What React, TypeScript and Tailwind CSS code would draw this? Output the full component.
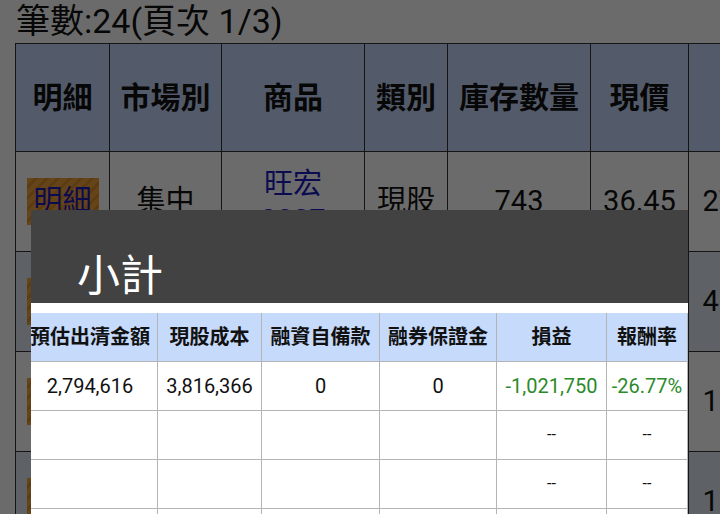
import React from "react";

const bgRows = [
  { name: "旺宏", code: "2337", kind: "現股", qty: "743", price: "36.45", last: "27,082" },
  { name: "友達", code: "2409", kind: "現股", qty: "1,000", price: "14.10", last: "41,300" },
  { name: "華邦電", code: "2344", kind: "現股", qty: "500", price: "22.30", last: "11,150" },
  { name: "群創", code: "3481", kind: "現股", qty: "900", price: "12.05", last: "10,845" },
];

const subHead = ["預估出清金額", "現股成本", "融資自備款", "融券保證金", "損益", "報酬率"];

export default function App() {
  return (
    <div className="relative w-[720px] h-[514px] overflow-hidden bg-white font-[Roboto,'Noto_Sans_CJK_TC',sans-serif] text-[#111]">
      {/* page behind the dialog */}
      <div className="pl-[15px]">
        <div className="h-[43px] pl-px text-[34px] leading-[42px] whitespace-nowrap">筆數:24(頁次 1/3)</div>
        <div className="grid w-max grid-cols-[93px_111px_142px_82px_142px_97px_114px] gap-px bg-[#333] p-px">
          {["明細", "市場別", "商品", "類別", "庫存數量", "現價"].map((h) => (
            <div key={h} className="h-[107px] flex items-center justify-center bg-[#c6dafc] text-[30px] font-bold whitespace-nowrap">
              {h}
            </div>
          ))}
          <div className="h-[107px] bg-[#c6dafc]" />
          {bgRows.map((r, i) => {
            const rowBg = i % 2 === 0 ? "bg-white" : "bg-[#dfe7f0]";
            return (
              <React.Fragment key={r.code}>
                <div className={`h-[99px] flex items-center justify-center ${rowBg}`}>
                  <div className="w-[72px] h-[47px] flex items-center justify-center bg-[repeating-linear-gradient(135deg,#f0a23c_0px,#f0a23c_5px,#de8f2a_5px,#de8f2a_8px)] text-[29px] text-[#1c1cc0]">
                    明細
                  </div>
                </div>
                <div className={`h-[99px] flex items-center justify-center text-[29px] ${rowBg}`}>集中</div>
                <div className={`h-[99px] flex flex-col items-center justify-center text-[29px] leading-[36px] text-[#1c1cc0] ${rowBg}`}>
                  <span>{r.name}</span>
                  <span>{r.code}</span>
                </div>
                <div className={`h-[99px] flex items-center justify-center text-[29px] ${rowBg}`}>{r.kind}</div>
                <div className={`h-[99px] flex items-center justify-center text-[29px] ${rowBg}`}>{r.qty}</div>
                <div className={`h-[99px] flex items-center justify-center text-[29px] ${rowBg}`}>{r.price}</div>
                <div className={`h-[99px] flex items-center justify-center text-[29px] ${rowBg}`}>{r.last}</div>
              </React.Fragment>
            );
          })}
        </div>
      </div>

      {/* dim */}
      <div className="absolute inset-0 bg-black/[0.58]" />

      {/* 小計 dialog */}
      <div className="absolute left-[31px] top-[210px] w-[657px] h-[330px] overflow-hidden bg-white">
        <div className="h-[93px] bg-[#424242] pt-[41px] pl-[46px] text-[43px] leading-[50px] text-white">小計</div>
        <div className="pt-[10px] ml-[-8px]">
          <div className="grid w-max grid-cols-[134px_103px_117px_116px_109px_80px] gap-px bg-[#b4b4b4] pb-px pr-px">
            {subHead.map((h) => (
              <div key={h} className="h-[48px] flex items-center justify-center bg-[#c6dafc] text-[20px] font-bold whitespace-nowrap">
                {h}
              </div>
            ))}
            <div className="h-[48px] flex items-center justify-center bg-white text-[20px]">2,794,616</div>
            <div className="h-[48px] flex items-center justify-center bg-white text-[20px]">3,816,366</div>
            <div className="h-[48px] flex items-center justify-center bg-white text-[20px]">0</div>
            <div className="h-[48px] flex items-center justify-center bg-white text-[20px]">0</div>
            <div className="h-[48px] flex items-center justify-center bg-white text-[20px] text-[#2b8a2b]">-1,021,750</div>
            <div className="h-[48px] flex items-center justify-center bg-white text-[20px] text-[#2b8a2b]">-26.77%</div>
            {[0, 1].map((k) => (
              <React.Fragment key={k}>
                <div className="h-[48px] bg-white" />
                <div className="h-[48px] bg-white" />
                <div className="h-[48px] bg-white" />
                <div className="h-[48px] bg-white" />
                <div className="h-[48px] flex items-center justify-center bg-white text-[16px]">--</div>
                <div className="h-[48px] flex items-center justify-center bg-white text-[16px]">--</div>
              </React.Fragment>
            ))}
            {[0, 1, 2, 3, 4, 5].map((k) => (
              <div key={k} className="h-[48px] bg-white" />
            ))}
          </div>
        </div>
      </div>
    </div>
  );
}
